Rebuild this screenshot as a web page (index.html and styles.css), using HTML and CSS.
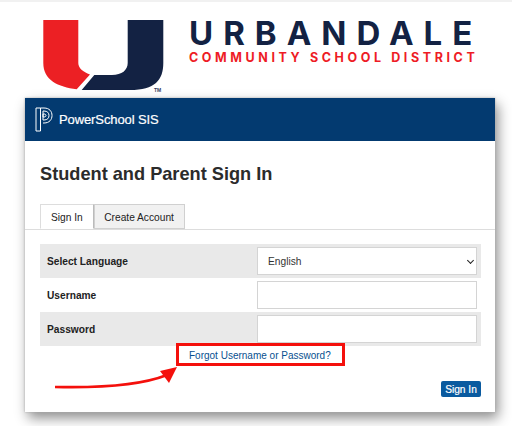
FILE: index.html
```html
<!DOCTYPE html>
<html lang="en">
<head>
<meta charset="utf-8">
<title>Student and Parent Sign In</title>
<link rel="stylesheet" href="styles.css">
</head>
<body>
<div class="page">
  <header class="brand">
    <svg class="u-logo" width="124" height="74" viewBox="43 20 124 74" aria-hidden="true">
      <path class="u-red" d="M43.3 20H78.3V63C78.3 68 83 72 90 74.5L76.7 89.3C58 87 43.3 80 43.3 63Z"/>
      <path class="u-navy" d="M127.7 20H163.3V63C163.3 80 155 90 130 90H81.7L94.3 75H112C122 75 127.7 70 127.7 63Z"/>
      <text class="u-tm" x="154" y="92">TM</text>
    </svg>
    <div class="wordmark">
      <div class="wm-main">URBANDALE</div>
      <div class="wm-sub">COMMUNITY SCHOOL DISTRICT</div>
    </div>
  </header>

  <main class="card">
    <div class="card-head">
      <svg class="ps-logo" width="18" height="25" viewBox="0 0 18 25" aria-hidden="true">
        <path d="M1 1H5.5V24H1Z"/>
        <path d="M5.5 1H9C14.5 1 17 4.5 17 8.5S14.5 16 9 16H8"/>
        <path d="M8 4H9C12.5 4 14 6 14 8.5S12.5 13 9 13H8Z"/>
        <path d="M8 7H9C10.3 7 11 7.7 11 8.5S10.3 10 9 10H8Z"/>
      </svg>
      <span class="ps-name">PowerSchool SIS</span>
    </div>
    <div class="card-body">
      <h1 class="title">Student and Parent Sign In</h1>
      <nav class="tabs">
        <a class="tab tab-active">Sign In</a>
        <a class="tab">Create Account</a>
      </nav>
      <form class="fields">
        <div class="row row-shade">
          <label class="field-label">Select Language</label>
          <div class="select-wrap">
            <select class="control control-select"><option>English</option></select>
          </div>
        </div>
        <div class="row">
          <label class="field-label">Username</label>
          <input class="control" type="text">
        </div>
        <div class="row row-shade">
          <label class="field-label">Password</label>
          <input class="control" type="password">
        </div>
      </form>
      <div class="forgot-line">
        <a class="forgot">Forgot Username or Password?</a>
      </div>
      <div class="actions">
        <button class="signin" type="button">Sign In</button>
      </div>
    </div>
    <svg class="arrow" width="130" height="32" viewBox="0 0 130 32" aria-hidden="true">
      <path class="arrow-line" d="M1 23C45 24 85 22 113 11"/>
      <path class="arrow-head" d="M106 7L123 3L115 19Z"/>
    </svg>
  </main>
</div>
</body>
</html>
```
FILE: styles.css
```css
* { box-sizing: border-box; }
html, body { margin: 0; height: 100%; }
body {
  background: #fff;
  overflow: hidden;
  font-family: "Liberation Sans", Arial, sans-serif;
  color: #222;
}
.page {
  width: 512px;
  height: 426px;
  border-top: 2px solid #f1f1f1;
  padding: 18px 17px 0 25px;
}
.brand {
  display: flex;
  align-items: flex-start;
  height: 78px;
  padding-left: 18px;
}
.u-logo { display: block; flex: none; }
.u-red { fill: #ec2024; }
.u-navy { fill: #132243; }
.u-tm { font: bold 5px "Liberation Sans", sans-serif; fill: #33415f; }
.wordmark { margin-left: 22px; }
.wm-main {
  font-family: Inter, sans-serif;
  font-weight: 700;
  font-size: 33px;
  line-height: 24px;
  margin-top: 1px;
  letter-spacing: 10px;
  color: #132243;
  white-space: nowrap;
}
.wm-sub {
  font-family: Inter, sans-serif;
  font-weight: 700;
  font-size: 12.5px;
  line-height: 10px;
  margin-top: 8px;
  letter-spacing: 3.6px;
  color: #ee1c25;
  white-space: nowrap;
}
.card {
  position: relative;
  width: 470px;
  height: 314px;
  background: #fff;
  box-shadow: 0 0 2px #aaa, 3px 6px 12px rgba(0, 0, 0, 0.45);
}
.card-head {
  height: 43px;
  background: #033a70;
  display: flex;
  align-items: center;
  padding-left: 10px;
  color: #fff;
}
.ps-logo { flex: none; }
.ps-logo path { fill: none; stroke: #fff; stroke-width: 1; }
.ps-name {
  margin-left: 6px;
  font-size: 13px;
  font-weight: 400;
  -webkit-text-stroke: 0.2px #fff;
  letter-spacing: -0.1px;
}
.card-body { padding: 22px 14px 0 15px; }
.title {
  margin: 0;
  font-size: 18.2px;
  line-height: 22px;
  font-weight: 700;
  color: #2b2b2b;
}
.tabs {
  display: flex;
  align-items: flex-end;
  height: 25px;
  margin: 20px -14px 14px -15px;
  padding-left: 15px;
  border-bottom: 1px solid #ddd;
}
.tab {
  height: 25px;
  display: flex;
  align-items: center;
  padding: 2px 10px 0 9.5px;
  font-size: 10.2px;
  color: #222;
  background: #f1f1f1;
  border: 1px solid #d0d0d0;
}
.tab-active {
  padding: 2px 10px 0;
  background: #fff;
  border-color: #ddd;
  border-bottom-color: #fff;
  border-right-color: #bbb;
}
.fields { display: flex; flex-direction: column; }
.row {
  height: 34px;
  display: flex;
  align-items: center;
  justify-content: space-between;
  padding: 0 4px 0 7px;
}
.row-shade { background: #e9e9e9; }
.field-label { font-size: 10.2px; font-weight: 700; color: #222; }
.control {
  display: block;
  width: 220px;
  height: 28px;
  margin: 0;
  background: #fff;
  border: 1px solid #d4d4d4;
  font-family: inherit;
  font-size: 10.2px;
  color: #333;
  padding: 0 10px;
  border-radius: 0;
}
.select-wrap { position: relative; }
.select-wrap::after {
  content: "";
  position: absolute;
  right: 4px;
  top: 11px;
  width: 4px;
  height: 4px;
  border-right: 1px solid #222;
  border-bottom: 1px solid #222;
  transform: rotate(45deg);
  pointer-events: none;
}
.control-select { appearance: none; -webkit-appearance: none; }
.forgot-line {
  display: flex;
  justify-content: center;
  margin-top: -3px;
  position: relative;
}
.forgot {
  display: block;
  width: 169px;
  height: 23px;
  line-height: 20px;
  padding-left: 10px;
  border: 3px solid #f4100c;
  font-size: 10px;
  color: #08508f;
  white-space: nowrap;
}
.actions {
  display: flex;
  justify-content: flex-end;
  margin-top: 15px;
}
.signin {
  width: 40px;
  height: 16px;
  padding: 0;
  border: 0;
  border-radius: 2px;
  background: #0a5a9f;
  color: #fff;
  font-family: inherit;
  font-size: 10.2px;
  font-weight: 400;
  -webkit-text-stroke: 0.2px #fff;
}
.arrow { position: absolute; left: 29px; top: 266px; }
.arrow-line { fill: none; stroke: #f4100c; stroke-width: 2.7; }
.arrow-head { fill: #f4100c; }
```
